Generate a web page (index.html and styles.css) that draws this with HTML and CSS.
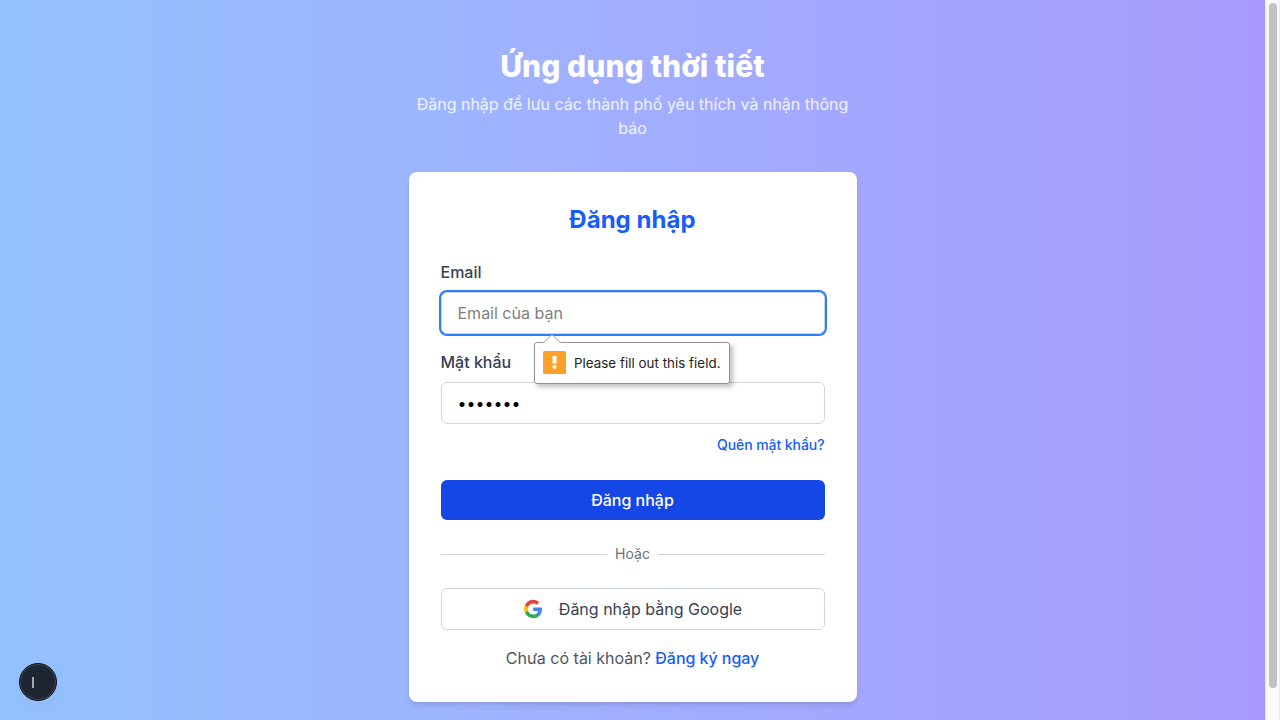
FILE: index.html
```html
<!DOCTYPE html>
<html lang="vi">
<head>
<meta charset="utf-8">
<title>Ứng dụng thời tiết</title>
<link rel="stylesheet" href="styles.css">
</head>
<body>
<main class="page">
  <div class="column">
    <header class="intro">
      <h1 class="app-title">Ứng dụng thời tiết</h1>
      <p class="app-subtitle">Đăng nhập để lưu các thành phố yêu thích và nhận thông báo</p>
    </header>
    <form class="card" novalidate>
      <h2 class="card-title">Đăng nhập</h2>
      <div class="field">
        <label class="label" for="email">Email</label>
        <input class="input input-active" id="email" type="email" placeholder="Email của bạn">
        <div class="tooltip">
          <svg class="tooltip-arrow" width="18" height="10" viewBox="0 0 18 10"><path d="M0 9 9 .7 18 9V10H0Z" fill="#fff"/><path d="M.5 8.800 9 .7l8.500 8.100" fill="none" stroke="#999" stroke-width=".9"/></svg>
          <svg class="tooltip-icon" width="23" height="23" viewBox="0 0 23 23"><rect width="23" height="23" rx="1.500" fill="#ffa02b"/><rect x="9.500" y="5" width="4" height="7.500" fill="#fff"/><circle cx="11.500" cy="16" r="2" fill="#fff"/></svg>
          <span>Please fill out this field.</span>
        </div>
      </div>
      <div class="field">
        <label class="label" for="password">Mật khẩu</label>
        <input class="input" id="password" type="password" value="abcdefg">
      </div>
      <div class="forgot"><a class="link">Quên mật khẩu?</a></div>
      <button class="submit" type="button">Đăng nhập</button>
      <div class="divider"><span>Hoặc</span></div>
      <button class="google" type="button">
        <svg width="20" height="20" viewBox="0 0 24 24"><g transform="translate(1 1) scale(.9167)"><path fill="#4285F4" d="M23.760 12.270c0-.79-.07-1.540-.19-2.270H12.240v4.510h6.470c-.29 1.480-1.140 2.730-2.400 3.580v3h3.860c2.260-2.090 3.590-5.170 3.590-8.820z"/><path fill="#34A853" d="M12.240 24c3.240 0 5.950-1.080 7.930-2.910l-3.860-3c-1.080.72-2.450 1.160-4.070 1.160-3.130 0-5.780-2.110-6.730-4.960H1.520v3.090C3.490 21.300 7.540 24 12.240 24z"/><path fill="#FBBC05" d="M5.510 14.290c-.25-.72-.38-1.490-.38-2.290s.14-1.570.38-2.290V6.620H1.520A11.860 11.860 0 0 0 .24 12c0 1.940.47 3.770 1.280 5.380l3.990-3.090z"/><path fill="#EA4335" d="M12.240 4.750c1.770 0 3.350.61 4.600 1.800l3.420-3.420C18.190 1.190 15.480 0 12.240 0 7.540 0 3.490 2.700 1.520 6.620l3.990 3.090c.95-2.850 3.600-4.960 6.730-4.960z"/></g></svg>
        <span>Đăng nhập bằng Google</span>
      </button>
      <p class="signup">Chưa có tài khoản? <a class="link">Đăng ký ngay</a></p>
    </form>
  </div>
</main>
<div class="dev-badge"><span class="dev-mark"></span></div>
<div class="scroll-track"><div class="scroll-thumb"></div></div>
</body>
</html>
```
FILE: styles.css
```css
* { box-sizing: border-box; }
body {
  margin: 0;
  height: 720px;
  overflow: hidden;
  padding-right: 15px;
  font: 16px/24px Inter, sans-serif;
}
h1, h2, p { margin: 0; }
input, button { font: inherit; }
.page {
  min-height: 750px;
  padding: 48px 16px;
  display: flex;
  justify-content: center;
  background: linear-gradient(to right, #94c2ff, #a1afff 48%, #a79afc);
}
.column { width: 448px; }
.intro { text-align: center; margin-bottom: 32px; }
.app-title { font-size: 30px; line-height: 36px; font-weight: 800; letter-spacing: 0.08px; color: #fff; }
.app-subtitle { margin-top: 8px; color: rgba(255, 255, 255, .8); -webkit-text-stroke: .2px rgba(255, 255, 255, .6); }
.card {
  padding: 32px;
  border-radius: 8px;
  background: #fff;
  box-shadow: 0 4px 6px -1px rgba(0, 0, 0, .1), 0 2px 4px -2px rgba(0, 0, 0, .1);
}
.card-title { margin-bottom: 24px; font-size: 24px; line-height: 32px; font-weight: 700; letter-spacing: .05px; text-align: center; color: #155dfc; }
.field { position: relative; margin-bottom: 16px; }
.label { display: block; margin-bottom: 8px; font-weight: 500; color: #364153; }
.input {
  display: block;
  width: 100%;
  height: 42px;
  padding: 8px 16px;
  border: 1px solid #d1d5dc;
  border-radius: 6px;
  background: #fff;
  color: #000;
  outline: none;
}
.input::placeholder { color: #808080; opacity: 1; }
.input-active { box-shadow: 0 0 0 2px #2b7fff; }
.tooltip {
  position: absolute;
  z-index: 2;
  top: 82px;
  left: 93.500px;
  width: 196px;
  height: 42px;
  padding: 0 8px 1px;
  display: flex;
  align-items: center;
  gap: 8px;
  border: 1px solid #929292;
  border-radius: 3px;
  background: #fff;
  box-shadow: 3px 3px 5px rgba(0, 0, 0, .25);
  font-size: 13.33px;
  line-height: 18px;
  letter-spacing: .04px;
  white-space: nowrap;
  color: #222;
}
.tooltip-arrow { position: absolute; top: -9px; left: 8px; }
.tooltip-icon { flex: none; }
.forgot { margin: -5px 0 25px; text-align: right; font-size: 14px; line-height: 20px; letter-spacing: -.07px; }
.link { font-weight: 500; color: #155dfc; }
.signup .link { letter-spacing: -.05px; }
.submit {
  display: block;
  width: 100%;
  height: 40px;
  padding: 0;
  border: 0;
  border-radius: 6px;
  background: #1447e6;
  color: #fff;
  font-weight: 500;
}
.divider { display: flex; align-items: center; gap: 8px; margin: 24px 0; font-size: 14px; line-height: 20px; color: #6a7282; }
.divider::before, .divider::after { content: ""; flex: 1; height: 1px; background: #d1d5dc; }
.google {
  display: flex;
  align-items: center;
  justify-content: center;
  gap: 16px;
  width: 100%;
  height: 42px;
  border: 1px solid #d1d5dc;
  border-radius: 6px;
  background: #fff;
  color: #364153;
}
.signup { margin-top: 16px; text-align: center; color: #4a5565; }
.dev-badge {
  position: fixed;
  left: 19px;
  top: 663px;
  width: 38px;
  height: 38px;
  padding: 13px 12px;
  border: 1px solid #111318;
  border-radius: 50%;
  background: #1f2633;
  box-shadow: inset 0 0 0 1px #414854, 0 8px 24px rgba(0, 0, 0, .04);
}
.dev-mark { display: block; width: 2px; height: 11px; background: #a5a8ad; }
.scroll-track {
  position: fixed;
  top: 0;
  right: 0;
  width: 15px;
  height: 720px;
  padding: 3px 3px 0;
  border-left: 1px solid #e8e8e8;
  border-right: 1px solid #ededed;
  background: #fafafa;
}
.scroll-thumb { width: 8px; height: 685px; border-radius: 4px; background: #c1c1c1; }
```
